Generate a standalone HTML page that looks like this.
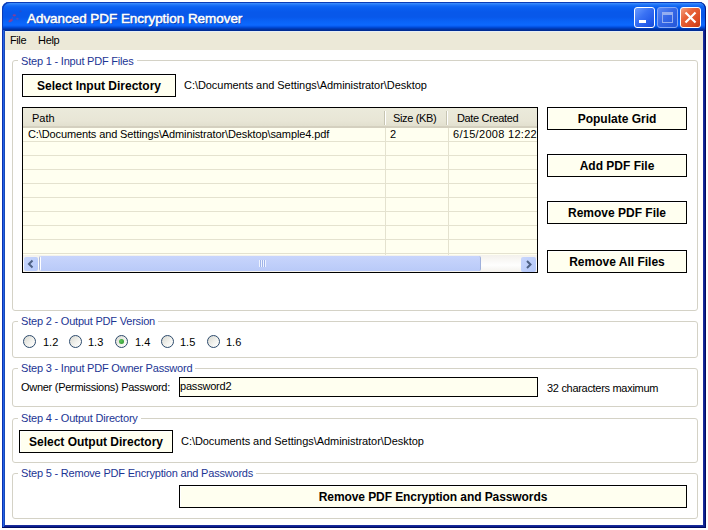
<!DOCTYPE html>
<html><head><meta charset="utf-8">
<style>
*{margin:0;padding:0;box-sizing:border-box}
html,body{width:708px;height:530px;overflow:hidden;background:#fff}
body{position:relative;font-family:"Liberation Sans",sans-serif;font-size:11px;color:#000}
.a{position:absolute}
.t{position:absolute;white-space:pre;line-height:12px}
#win{left:2px;top:2px;width:704px;height:526px;background:#0a40c8;border-radius:7px 7px 0 0}
#title{left:2px;top:2px;width:704px;height:29px;border-radius:7px 7px 0 0;box-shadow:inset 1px 1px 0 #0a3cb8,inset -1px 0 0 #001a80;background:linear-gradient(#2a5cd0 0px,#2a5cd0 1px,#4492fc 1px,#2c80fa 2px,#1268f4 4px,#0a5ef0 6px,#0858ea 10px,#0858ea 15px,#0a62f6 19px,#0c68fe 23px,#0a5ef4 24px,#0050e0 25px,#0042c8 26px,#0036ac 27px,#002e98 28px,#002a90 29px)}
#client{left:5px;top:31px;width:698px;height:494px;background:#fff}
#menu{left:5px;top:31px;width:698px;height:19px;background:#ece9d8;border-top:1px solid #e6eef6}
.grp{position:absolute;border:1px solid #d4d2c6;border-radius:3px;left:12px;width:686px}
.cap{position:absolute;white-space:pre;color:#1c3594;background:#fff;padding:0 3px;line-height:12px;letter-spacing:-0.2px}
.btn{position:absolute;border:1px solid #000;background:#fffff0;font-weight:bold;font-size:12px;text-align:center;white-space:pre;box-shadow:inset 1px 1px 0 #fff}
.rad{position:absolute;width:13px;height:13px;border:1px solid #2c4a6c;border-radius:50%;background:linear-gradient(135deg,#d8d8d0,#f4f4f0 60%,#fff)}
</style></head><body>
<div id="win" class="a"></div>
<div id="title" class="a"></div>
<div class="a" style="left:2px;top:30px;width:1px;height:498px;background:#0b32b4"></div>
<div class="a" style="left:3px;top:30px;width:1px;height:498px;background:#2262e4"></div>
<div class="a" style="left:4px;top:30px;width:1px;height:498px;background:#1a4ab8"></div>
<div class="a" style="left:703px;top:30px;width:1px;height:498px;background:#1a2c9c"></div>
<div class="a" style="left:704px;top:30px;width:1px;height:498px;background:#0c208c"></div>
<div class="a" style="left:705px;top:30px;width:1px;height:498px;background:#000c64"></div>
<div class="a" style="left:5px;top:525px;width:698px;height:1px;background:#1a2c9c"></div>
<div class="a" style="left:4px;top:526px;width:700px;height:1px;background:#0c208c"></div>
<div class="a" style="left:2px;top:527px;width:704px;height:1px;background:#000c64"></div>
<!-- icon -->
<svg class="a" style="left:2px;top:4px" width="26" height="26">
<ellipse cx="12.3" cy="11.3" rx="1.7" ry="1.1" fill="#c8306a" opacity="0.65"/>
<ellipse cx="8.6" cy="16.6" rx="2.4" ry="1.3" fill="#c8306a" opacity="0.65" transform="rotate(-30 8.6 16.6)"/>
<ellipse cx="15.4" cy="14.7" rx="1.3" ry="1" fill="#a83c9a" opacity="0.45"/>
<ellipse cx="18.4" cy="7.3" rx="1.3" ry="1" fill="#5a3c9a" opacity="0.35"/>
<ellipse cx="10.5" cy="14" rx="0.8" ry="1.2" fill="#9a3c9a" opacity="0.3"/>
</svg>
<div class="t" style="left:27px;top:10px;font-size:13.5px;color:#fff;-webkit-text-stroke:0.5px #fff;letter-spacing:-0.05px;line-height:17px;text-shadow:1px 1px 0 #0a3aa8">Advanced PDF Encryption Remover</div>
<!-- title buttons -->
<div class="a" style="left:634px;top:7px;width:21px;height:21px;border:1px solid #fff;border-radius:3px;background:linear-gradient(135deg,#6a9cff,#3a72f4 40%,#2058e8 80%,#1a4cd0)"></div>
<div class="a" style="left:639px;top:20px;width:7px;height:3px;background:#fff"></div>
<div class="a" style="left:657px;top:7px;width:21px;height:21px;border:1px solid #86a8f4;border-radius:3px;background:linear-gradient(135deg,#5a88f4,#3466e6 50%,#2456d8)"></div>
<div class="a" style="left:662px;top:12px;width:11px;height:11px;border:1px solid #94aef0;border-top-width:3px"></div>
<div class="a" style="left:680px;top:7px;width:21px;height:21px;border:1px solid #fff;border-radius:3px;background:linear-gradient(135deg,#f4a080,#e8643a 35%,#dc4a22 75%,#c23a14)"></div>
<svg class="a" style="left:680px;top:7px" width="21" height="21"><path d="M5.5 5.5 L15.5 15.5 M15.5 5.5 L5.5 15.5" stroke="#fff" stroke-width="2.2"/></svg>

<div id="client" class="a"></div>
<div id="menu" class="a"></div>
<div class="t" style="left:10px;top:34px;letter-spacing:-0.4px">File</div>
<div class="t" style="left:38px;top:34px;letter-spacing:-0.3px">Help</div>

<!-- Step 1 -->
<div class="grp" style="top:60px;height:251px"></div>
<div class="cap" style="left:18px;top:55px">Step 1 - Input PDF Files</div>
<div class="btn" style="left:22px;top:74px;width:154px;height:23px;line-height:22px">Select Input Directory</div>
<div class="t" style="left:184px;top:79px;letter-spacing:-0.05px">C:\Documents and Settings\Administrator\Desktop</div>

<!-- grid -->
<div class="a" style="left:22px;top:107px;width:516px;height:166px;border:1px solid #000;background:#fffff0;overflow:hidden">
  <div class="a" style="left:0;top:0;width:514px;height:20px;background:linear-gradient(#ebeadb,#e8e6d6 70%,#e2e0cf);border-bottom:2px solid #d4d0bf"></div>
  <div class="a" style="left:361px;top:3px;width:1px;height:14px;background:#c7c5b2"></div>
  <div class="a" style="left:362px;top:3px;width:1px;height:14px;background:#fff"></div>
  <div class="a" style="left:423px;top:3px;width:1px;height:14px;background:#c7c5b2"></div>
  <div class="a" style="left:424px;top:3px;width:1px;height:14px;background:#fff"></div>
  <div class="t" style="left:9px;top:4px">Path</div>
  <div class="t" style="left:370px;top:4px;letter-spacing:-0.35px">Size (KB)</div>
  <div class="t" style="left:434px;top:4px;letter-spacing:-0.35px">Date Created</div>
  <div class="a" style="left:362px;top:20px;width:1px;height:127px;background:#e4e2cf"></div>
  <div class="a" style="left:425px;top:20px;width:1px;height:127px;background:#e4e2cf"></div>
  <div class="a" style="left:0;top:33px;width:514px;height:1px;background:#e4e2cf"></div>
  <div class="a" style="left:0;top:47px;width:514px;height:1px;background:#e4e2cf"></div>
  <div class="a" style="left:0;top:61px;width:514px;height:1px;background:#e4e2cf"></div>
  <div class="a" style="left:0;top:75px;width:514px;height:1px;background:#e4e2cf"></div>
  <div class="a" style="left:0;top:89px;width:514px;height:1px;background:#e4e2cf"></div>
  <div class="a" style="left:0;top:103px;width:514px;height:1px;background:#e4e2cf"></div>
  <div class="a" style="left:0;top:117px;width:514px;height:1px;background:#e4e2cf"></div>
  <div class="a" style="left:0;top:131px;width:514px;height:1px;background:#e4e2cf"></div>
  <div class="a" style="left:0;top:145px;width:514px;height:1px;background:#e4e2cf"></div>
  <div class="t" style="left:5px;top:20px;letter-spacing:-0.12px">C:\Documents and Settings\Administrator\Desktop\sample4.pdf</div>
  <div class="t" style="left:367px;top:20px">2</div>
  <div class="t" style="left:430px;top:20px;letter-spacing:0.3px">6/15/2008 12:22</div>
  <!-- scrollbar -->
  <div class="a" style="left:0;top:147px;width:514px;height:17px;background:linear-gradient(#f3f1ec,#fefefe 60%,#f3f1ec)"></div>
  <div class="a" style="left:1px;top:149px;width:14px;height:14px;border-radius:2px;background:linear-gradient(135deg,#c8d6fc,#b4c8fa)"></div>
  <svg class="a" style="left:1px;top:149px" width="15" height="15"><path d="M8.5 3.5 L5 7 L8.5 10.5" stroke="#4d6185" stroke-width="2" fill="none"/></svg>
  <div class="a" style="left:16px;top:148px;width:442px;height:15px;border-radius:2px;border-left:1px solid #aab6d6;border-right:1px solid #9fb0dc;background:linear-gradient(90deg,#fff 0 1px,transparent 1px),linear-gradient(#c8d5fc,#b9caf8)"></div>
  <div class="a" style="left:236px;top:152px;width:7px;height:7px;background:repeating-linear-gradient(90deg,#eef3ff 0 1px,#9fb4e8 1px 2px)"></div>
  <div class="a" style="left:498px;top:149px;width:15px;height:15px;border-radius:2px;background:linear-gradient(135deg,#c8d6fc,#b4c8fa)"></div>
  <svg class="a" style="left:498px;top:149px" width="15" height="15"><path d="M6 4 L9.5 7.5 L6 11" stroke="#4d6185" stroke-width="2" fill="none"/></svg>
</div>

<div class="btn" style="left:547px;top:107px;width:140px;height:23px;line-height:23px">Populate Grid</div>
<div class="btn" style="left:547px;top:154px;width:140px;height:23px;line-height:23px">Add PDF File</div>
<div class="btn" style="left:547px;top:201px;width:140px;height:23px;line-height:23px">Remove PDF File</div>
<div class="btn" style="left:547px;top:250px;width:140px;height:23px;line-height:23px">Remove All Files</div>

<!-- Step 2 -->
<div class="grp" style="top:321px;height:37px"></div>
<div class="cap" style="left:18px;top:315px">Step 2 - Output PDF Version</div>
<div class="rad" style="left:23px;top:335px"></div>
<div class="t" style="left:43px;top:336px">1.2</div>
<div class="rad" style="left:69px;top:335px"></div>
<div class="t" style="left:88px;top:336px">1.3</div>
<div class="rad" style="left:115px;top:335px"></div>
<div class="a" style="left:119px;top:339px;width:5px;height:5px;border-radius:50%;background:radial-gradient(circle at 40% 40%,#5cc65c,#2a8e2a)"></div>
<div class="t" style="left:135px;top:336px">1.4</div>
<div class="rad" style="left:161px;top:335px"></div>
<div class="t" style="left:180px;top:336px">1.5</div>
<div class="rad" style="left:207px;top:335px"></div>
<div class="t" style="left:226px;top:336px">1.6</div>

<!-- Step 3 -->
<div class="grp" style="top:368px;height:39px"></div>
<div class="cap" style="left:18px;top:362px">Step 3 - Input PDF Owner Password</div>
<div class="t" style="left:21px;top:381px;letter-spacing:-0.28px">Owner (Permissions) Password:</div>
<div class="a" style="left:179px;top:377px;width:359px;height:20px;border:1px solid #000;background:#fffff0"></div>
<div class="t" style="left:180px;top:380px;letter-spacing:-0.2px">password2</div>
<div class="t" style="left:547px;top:382px;letter-spacing:-0.3px">32 characters maximum</div>

<!-- Step 4 -->
<div class="grp" style="top:418px;height:45px"></div>
<div class="cap" style="left:18px;top:412px">Step 4 - Output Directory</div>
<div class="btn" style="left:19px;top:430px;width:154px;height:23px;line-height:22px">Select Output Directory</div>
<div class="t" style="left:181px;top:435px;letter-spacing:-0.05px">C:\Documents and Settings\Administrator\Desktop</div>

<!-- Step 5 -->
<div class="grp" style="top:473px;height:46px"></div>
<div class="cap" style="left:18px;top:467px">Step 5 - Remove PDF Encryption and Passwords</div>
<div class="btn" style="left:179px;top:485px;width:508px;height:23px;line-height:23px;letter-spacing:-0.08px">Remove PDF Encryption and Passwords</div>
</body></html>
